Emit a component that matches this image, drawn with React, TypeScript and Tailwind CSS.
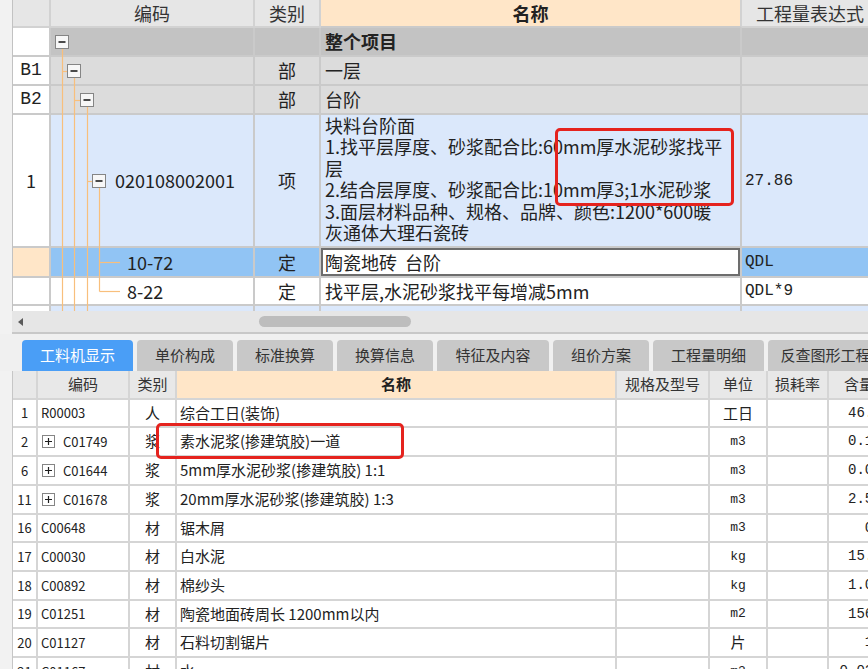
import React from "react";

const CJK = "[font-family:'Noto_Sans_CJK_SC',sans-serif]";
const MONO = "[font-family:'Liberation_Mono','Noto_Sans_CJK_SC',monospace]";

function MinusBox() {
  return (
    <svg width="14" height="14" viewBox="0 0 14 14" className="shrink-0">
      <rect x="0.5" y="0.5" width="13" height="13" fill="#f7f7f7" stroke="#858585" />
      <path d="M3.5 7h7" stroke="#1e1e1e" strokeWidth="1.6" />
    </svg>
  );
}

function PlusBox() {
  return (
    <svg width="13" height="13" viewBox="0 0 13 13" className="shrink-0">
      <rect x="0.5" y="0.5" width="12" height="12" fill="#fff" stroke="#858585" />
      <path d="M3 6.5h7M6.5 3v7" stroke="#1e1e1e" strokeWidth="1.2" />
    </svg>
  );
}

const TC = "flex shrink-0 items-center border-b-2 border-r-2 border-b-[#cacaca] border-r-[#cacaca] h-full";

function TopTable() {
  return (
    <div className="relative flex h-[311px] shrink-0 overflow-hidden">
      <div className="w-[12px] shrink-0 bg-[#f2f2f2]" />
      <div className={`flex min-w-0 flex-1 flex-col border-l border-l-[#c2c2c2] bg-white text-[18px] text-[#222] ${CJK}`}>
        {/* header */}
        <div className="flex h-[28px] shrink-0">
          <div className={`${TC} w-[38px] bg-[#e6e6e6] border-r-[#d2d2d2] border-b-[#d2d2d2]`} />
          <div className={`${TC} w-[204px] justify-center bg-[#e6e6e6] text-[#333] border-r-[#d2d2d2] border-b-[#d2d2d2]`}>编码</div>
          <div className={`${TC} w-[66px] justify-center bg-[#e6e6e6] text-[#333] border-r-[#d2d2d2] border-b-[#d2d2d2]`}>类别</div>
          <div className={`${TC} w-[421px] justify-center bg-[#ffe6c8] font-bold text-[#222] border-r-[#d2d2d2] border-b-[#4a9ef5]`}>名称</div>
          <div className={`${TC} w-[140px] bg-[#e6e6e6] pl-[14px] text-[#333] border-r-[#d2d2d2] border-b-[#d2d2d2]`}>工程量表达式</div>
        </div>
        {/* 整个项目 */}
        <div className="flex h-[29px] shrink-0">
          <div className={`${TC} w-[38px] bg-white`} />
          <div className={`${TC} w-[204px] bg-[#c3c3c3] pl-[4px] border-r-[#b8b8b8] border-b-[#b8b8b8]`}>
            <MinusBox />
          </div>
          <div className={`${TC} w-[66px] bg-[#c3c3c3] border-r-[#b8b8b8] border-b-[#b8b8b8]`} />
          <div className={`${TC} w-[421px] bg-[#c3c3c3] pl-[4px] font-bold border-r-[#b8b8b8] border-b-[#b8b8b8]`}>整个项目</div>
          <div className={`${TC} w-[140px] bg-[#c3c3c3] border-r-[#b8b8b8] border-b-[#b8b8b8]`} />
        </div>
        {/* B1 */}
        <div className="flex h-[29px] shrink-0">
          <div className={`${TC} w-[38px] justify-center bg-white ${MONO} text-[18px]`}>B1</div>
          <div className={`${TC} w-[204px] bg-[#dcdcdc] pl-[16px]`}>
            <MinusBox />
          </div>
          <div className={`${TC} w-[66px] justify-center bg-[#dcdcdc]`}>部</div>
          <div className={`${TC} w-[421px] bg-[#dcdcdc] pl-[4px]`}>一层</div>
          <div className={`${TC} w-[140px] bg-[#dcdcdc]`} />
        </div>
        {/* B2 */}
        <div className="flex h-[29px] shrink-0">
          <div className={`${TC} w-[38px] justify-center bg-white ${MONO} text-[18px]`}>B2</div>
          <div className={`${TC} w-[204px] bg-[#dcdcdc] pl-[29px]`}>
            <MinusBox />
          </div>
          <div className={`${TC} w-[66px] justify-center bg-[#dcdcdc]`}>部</div>
          <div className={`${TC} w-[421px] bg-[#dcdcdc] pl-[4px]`}>台阶</div>
          <div className={`${TC} w-[140px] bg-[#dcdcdc]`} />
        </div>
        {/* row 1 */}
        <div className="flex h-[133px] shrink-0">
          <div className={`${TC} w-[38px] justify-center bg-white`}>1</div>
          <div className={`${TC} w-[204px] gap-[9px] bg-[#dbe8fb] pl-[41px]`}>
            <MinusBox />
            <span>020108002001</span>
          </div>
          <div className={`${TC} w-[66px] justify-center bg-[#dbe8fb]`}>项</div>
          <div className={`${TC} w-[421px] flex-col !items-start overflow-hidden bg-[#dbe8fb] pl-[4px] leading-[21.4px] whitespace-nowrap`}>
            <span>块料台阶面</span>
            <span>1.找平层厚度、砂浆配合比:60mm厚水泥砂浆找平</span>
            <span>层</span>
            <span>2.结合层厚度、砂浆配合比:10mm厚3;1水泥砂浆</span>
            <span>3.面层材料品种、规格、品牌、颜色:1200*600暖</span>
            <span>灰通体大理石瓷砖</span>
          </div>
          <div className={`${TC} w-[140px] bg-[#dbe8fb] pl-[3px] ${MONO} text-[16px]`}>27.86</div>
        </div>
        {/* 10-72 selected */}
        <div className="flex h-[30px] shrink-0">
          <div className={`${TC} w-[38px] bg-[#ffe6c8] border-r-[#3b8cf0]`} />
          <div className={`${TC} w-[204px] bg-[#91c4f4] pl-[76px]`}>10-72</div>
          <div className={`${TC} w-[66px] justify-center bg-[#91c4f4]`}>定</div>
          <div className={`${TC} w-[421px] bg-[#91c4f4] border-r-[#91c4f4] border-b-[#cacaca]`}>
            <div className="flex h-full w-full items-center border-2 border-[#6d6d6d] bg-white pl-[2px] whitespace-pre">陶瓷地砖  台阶</div>
          </div>
          <div className={`${TC} w-[140px] bg-[#91c4f4] pl-[3px] ${MONO} text-[16px]`}>QDL</div>
        </div>
        {/* 8-22 */}
        <div className="flex h-[28px] shrink-0">
          <div className={`${TC} w-[38px] bg-white`} />
          <div className={`${TC} w-[204px] bg-white pl-[76px]`}>8-22</div>
          <div className={`${TC} w-[66px] justify-center bg-white`}>定</div>
          <div className={`${TC} w-[421px] bg-white pl-[4px] whitespace-nowrap`}>找平层,水泥砂浆找平每增减5mm</div>
          <div className={`${TC} w-[140px] bg-white pl-[3px] ${MONO} text-[16px]`}>QDL*9</div>
        </div>
        {/* partial row */}
        <div className="flex h-[28px] shrink-0">
          <div className={`${TC} w-[38px] bg-white`} />
          <div className={`${TC} w-[204px] bg-[#dbe8fb]`} />
          <div className={`${TC} w-[66px] bg-[#dbe8fb]`} />
          <div className={`${TC} w-[421px] !items-start bg-[#dbe8fb] pl-[4px] pt-[1px] whitespace-pre`}>块料楼地面  大理石楼地面</div>
          <div className={`${TC} w-[140px] bg-[#dbe8fb]`} />
        </div>
      </div>
      {/* tree connector lines */}
      <svg className="pointer-events-none absolute left-0 top-0" width="868" height="311" viewBox="0 0 868 311">
        <g stroke="#f8bf7c" strokeWidth="1.2" fill="none">
          <path d="M62.5 49V311" />
          <path d="M62.5 71.5H67" />
          <path d="M74.5 78V311" />
          <path d="M74.5 100.5H80" />
          <path d="M87.5 107V311" />
          <path d="M87.5 181.5H92" />
          <path d="M99.5 188V291.5" />
          <path d="M99.5 262.5H120" />
          <path d="M99.5 291.5H120" />
        </g>
      </svg>
    </div>
  );
}

function ScrollBar() {
  return (
    <div className="flex h-[23px] shrink-0">
      <div className="w-[12px] shrink-0 bg-[#f2f2f2]" />
      <div className="flex flex-1 flex-col">
        <div className="flex h-[21px] items-center bg-[#e6e6e6]">
          <svg width="5" height="8" viewBox="0 0 5 8" className="ml-[6px]">
            <path d="M5 0L0 4l5 4z" fill="#5a5a5a" />
          </svg>
          <div className="ml-[236px] h-[11px] w-[152px] rounded-full bg-[#bdbdbd]" />
        </div>
        <div className="h-[2px] bg-[#c8c8c8]" />
      </div>
    </div>
  );
}

const TABS: { label: string; w: string; active?: boolean }[] = [
  { label: "工料机显示", w: "w-[111px]", active: true },
  { label: "单价构成", w: "w-[96px]" },
  { label: "标准换算", w: "w-[96px]" },
  { label: "换算信息", w: "w-[96px]" },
  { label: "特征及内容", w: "w-[112px]" },
  { label: "组价方案", w: "w-[96px]" },
  { label: "工程量明细", w: "w-[111px]" },
  { label: "反查图形工程量", w: "w-[130px]" },
];

function Tabs() {
  return (
    <div className={`flex h-[37px] shrink-0 items-end gap-[4px] overflow-hidden bg-[#f0f0f0] pl-[22px] ${CJK}`}>
      {TABS.map((t) => (
        <div
          key={t.label}
          className={`flex h-[31px] shrink-0 items-center justify-center rounded-t-[4px] text-[15px] ${t.w} ${
            t.active ? "bg-[#4a9ef6] text-white" : "bg-[#c8c8c8] text-[#333]"
          }`}
        >
          {t.label}
        </div>
      ))}
    </div>
  );
}

type BRow = { n: string; code: string; plus?: boolean; kind: string; name: string; unit: string; mono?: boolean; qty: string; h: string };

const BROWS: BRow[] = [
  { n: "1", code: "R00003", kind: "人", name: "综合工日(装饰)", unit: "工日", qty: "46.67", h: "h-[28px]" },
  { n: "2", code: "C01749", plus: true, kind: "浆", name: "素水泥浆(掺建筑胶)一道", unit: "m3", mono: true, qty: "0.102", h: "h-[29px]" },
  { n: "6", code: "C01644", plus: true, kind: "浆", name: "5mm厚水泥砂浆(掺建筑胶) 1:1", unit: "m3", mono: true, qty: "0.051", h: "h-[29px]" },
  { n: "11", code: "C01678", plus: true, kind: "浆", name: "20mm厚水泥砂浆(掺建筑胶) 1:3", unit: "m3", mono: true, qty: "2.525", h: "h-[29px]" },
  { n: "16", code: "C00648", kind: "材", name: "锯木屑", unit: "m3", mono: true, qty: "0.6", h: "h-[28px]" },
  { n: "17", code: "C00030", kind: "材", name: "白水泥", unit: "kg", mono: true, qty: "15.00", h: "h-[29px]" },
  { n: "18", code: "C00892", kind: "材", name: "棉纱头", unit: "kg", mono: true, qty: "1.000", h: "h-[29px]" },
  { n: "19", code: "C01251", kind: "材", name: "陶瓷地面砖周长 1200mm以内", unit: "m2", mono: true, qty: "156.1", h: "h-[28px]" },
  { n: "20", code: "C01127", kind: "材", name: "石料切割锯片", unit: "片", qty: "1.4", h: "h-[29px]" },
  { n: "21", code: "C01167", kind: "材", name: "水", unit: "m3", mono: true, qty: "0.0263", h: "h-[29px]" },
];

const BC = "flex h-full shrink-0 items-center border-b-2 border-r-2 border-b-[#d5d5d5] border-r-[#d5d5d5]";

function BottomTable() {
  return (
    <div className="flex min-h-0 flex-1 overflow-hidden">
      <div className="w-[12px] shrink-0 bg-[#f2f2f2]" />
      <div className={`flex min-w-0 flex-1 flex-col border-l border-l-[#c6c6c6] bg-white text-[15px] text-[#222] ${CJK}`}>
        <div className="flex h-[29px] shrink-0 text-[#333]">
          <div className={`${BC} w-[25px] bg-[#e8e8e8]`} />
          <div className={`${BC} w-[92px] justify-center bg-[#e8e8e8]`}>编码</div>
          <div className={`${BC} w-[47px] justify-center bg-[#e8e8e8]`}>类别</div>
          <div className={`${BC} w-[440px] justify-center bg-[#ffe6c8] font-bold text-[#222] border-b-[#4a9ef5]`}>名称</div>
          <div className={`${BC} w-[93px] justify-center bg-[#e8e8e8]`}>规格及型号</div>
          <div className={`${BC} w-[58px] justify-center bg-[#e8e8e8]`}>单位</div>
          <div className={`${BC} w-[61px] justify-center bg-[#e8e8e8]`}>损耗率</div>
          <div className={`${BC} w-[80px] bg-[#e8e8e8] pl-[15px]`}>含量</div>
        </div>
        {BROWS.map((r) => (
          <div key={r.n} className={`flex shrink-0 ${r.h}`}>
            <div className={`${BC} w-[25px] justify-center text-[13px]`}>{r.n}</div>
            <div className={`${BC} w-[92px] text-[13px] ${r.plus ? "gap-[8px] pl-[4px]" : "pl-[3px]"}`}>
              {r.plus && <PlusBox />}
              <span>{r.code}</span>
            </div>
            <div className={`${BC} w-[47px] justify-center`}>{r.kind}</div>
            <div className={`${BC} w-[440px] pl-[3px] whitespace-pre`}>{r.name}</div>
            <div className={`${BC} w-[93px]`} />
            <div className={`${BC} w-[58px] justify-center ${r.mono ? `${MONO} text-[13px]` : ""}`}>{r.unit}</div>
            <div className={`${BC} w-[61px]`} />
            <div className={`${BC} w-[71px] justify-end pr-[8px] ${MONO} text-[14px]`}>{r.qty}</div>
          </div>
        ))}
      </div>
    </div>
  );
}

export default function App() {
  return (
    <div className={`relative flex h-[669px] w-[868px] flex-col overflow-hidden bg-[#f0f0f0] ${CJK}`}>
      <TopTable />
      <ScrollBar />
      <Tabs />
      <BottomTable />
      {/* red highlight boxes */}
      <div className="pointer-events-none absolute left-[555px] top-[128px] h-[78px] w-[179px] rounded-[5px] border-[3px] border-[#e5231e]" />
      <div className="pointer-events-none absolute left-[156px] top-[423px] h-[36px] w-[248px] rounded-[5px] border-[3px] border-[#e5231e]" />
    </div>
  );
}
